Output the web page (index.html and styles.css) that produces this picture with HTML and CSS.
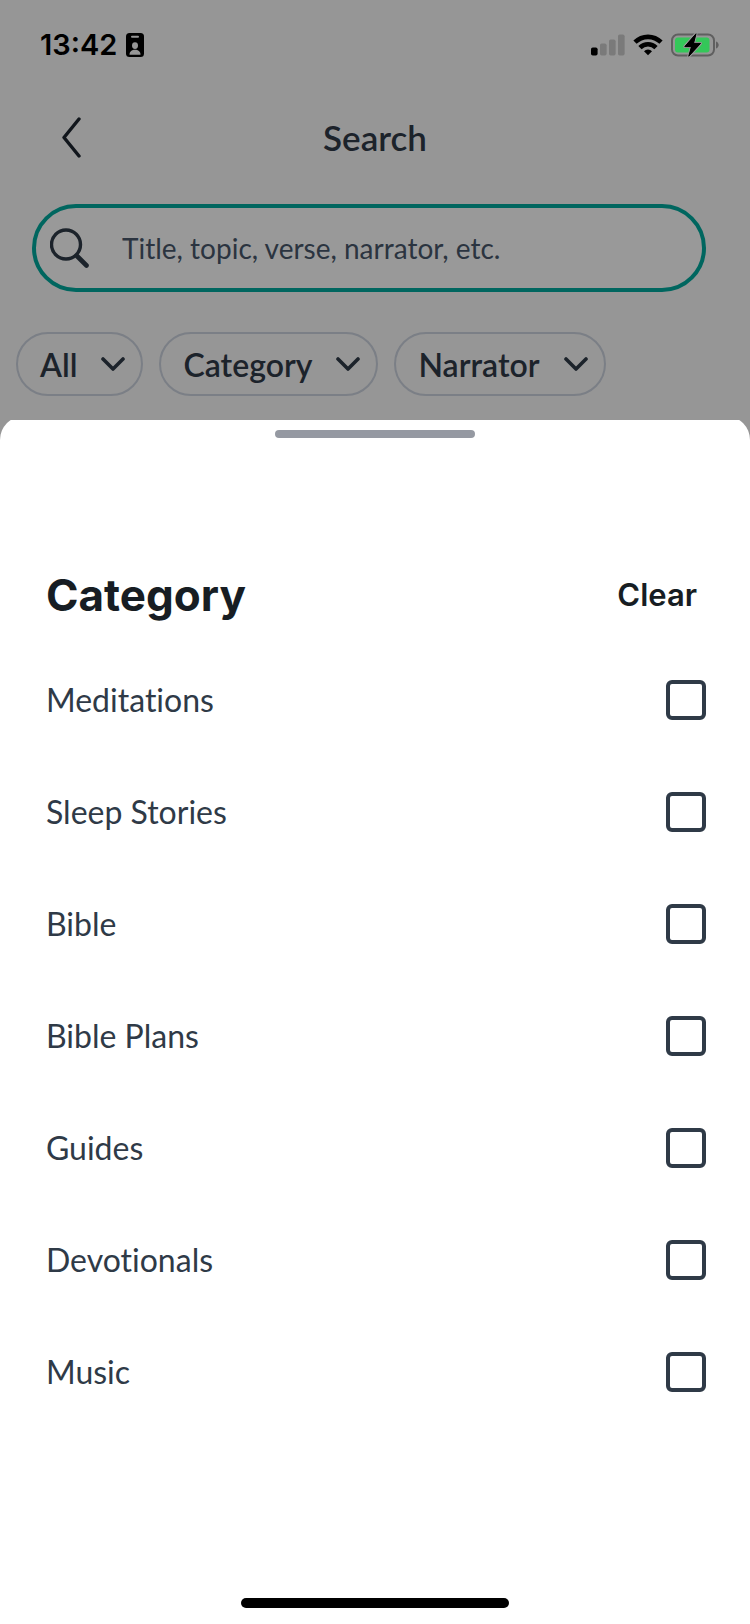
FILE: index.html
```
<!DOCTYPE html>
<html lang="en">
<head>
<meta charset="utf-8">
<meta name="viewport" content="width=device-width, initial-scale=1">
<title>Search</title>
<link rel="stylesheet" href="styles.css">
</head>
<body>
<div class="screen">
  <div class="status">
    <div class="status-left">
      <span class="time">13:42</span>
      <svg class="badge" width="18" height="24" viewBox="0 0 18 24" aria-hidden="true">
        <rect width="18" height="24" rx="3.5" fill="#000"/>
        <rect x="5" y="2.8" width="8" height="2" rx="1" fill="#969696"/>
        <ellipse cx="9" cy="12.6" rx="3" ry="3.4" fill="#969696"/>
        <path d="M3.5 21.8c0-3.400 2.400-5 5.500-5s5.500 1.600 5.500 5z" fill="#969696"/>
      </svg>
    </div>
    <div class="status-right">
      <svg width="34" height="22" viewBox="0 0 34 22" aria-hidden="true">
        <rect x="0" y="13.500" width="6.600" height="8" rx="1.800" fill="#000"/>
        <rect x="9" y="9.500" width="6.600" height="12" rx="1.800" fill="#7a7a7a"/>
        <rect x="18" y="5.500" width="6.600" height="16" rx="1.800" fill="#7a7a7a"/>
        <rect x="27" y="0.500" width="6.600" height="21" rx="1.800" fill="#7a7a7a"/>
      </svg>
      <svg width="30" height="22" viewBox="0 0 30 22" aria-hidden="true">
        <g fill="none" stroke="#000" stroke-width="4.600">
          <path d="M2 8.200a18.500 18.500 0 0 1 26 0"/>
          <path d="M7 13.600a11.400 11.400 0 0 1 16 0"/>
        </g>
        <path d="M15 21.300l-4-4.100a5.800 5.800 0 0 1 8 0z" fill="#000"/>
      </svg>
      <svg width="48" height="24" viewBox="0 0 48 24" aria-hidden="true">
        <rect x="1" y="1.500" width="42" height="21" rx="6" fill="none" stroke="#5f5f5f" stroke-width="2"/>
        <path d="M45 8.500c3.600 1.200 3.600 5.800 0 7z" fill="#5f5f5f"/>
        <rect x="4" y="4.500" width="34.500" height="15" rx="3" fill="#34c759"/>
        <path d="M25 0.800L13.800 13.600h6.700L17.800 23.200 29.500 10.400h-7z" fill="#000" stroke="#969696" stroke-width="3" stroke-linejoin="round" paint-order="stroke"/>
        <path d="M25 0.800L13.800 13.600h6.700L17.800 23.200 29.500 10.400h-7z" fill="#000" stroke="#000" stroke-width="1" stroke-linejoin="round"/>
      </svg>
    </div>
  </div>

  <header class="topbar">
    <button class="back" type="button" aria-label="Back">
      <svg width="20" height="42" viewBox="0 0 20 42" aria-hidden="true"><path d="M17 3L2 21.500l15 18.500" fill="none" stroke="#11161c" stroke-width="3.400" stroke-linecap="round" stroke-linejoin="round"/></svg>
    </button>
    <h1 class="title">Search</h1>
  </header>

  <label class="search">
    <svg width="40" height="40" viewBox="0 0 40 40" aria-hidden="true"><g fill="none" stroke="#1c232b" stroke-linecap="round"><circle cx="16" cy="16.500" r="14.500" stroke-width="3.400"/><path d="M27 28L36.500 37.500" stroke-width="4.600"/></g></svg>
    <input class="field" type="text" placeholder="Title, topic, verse, narrator, etc." aria-label="Search">
  </label>

  <div class="chips">
    <button class="chip" type="button">All <svg width="24" height="16" viewBox="0 0 24 16" aria-hidden="true"><path class="chevron" d="M2 3l10 10L22 3"/></svg></button>
    <button class="chip" type="button">Category <svg width="24" height="16" viewBox="0 0 24 16" aria-hidden="true"><path class="chevron" d="M2 3l10 10L22 3"/></svg></button>
    <button class="chip" type="button">Narrator <svg width="24" height="16" viewBox="0 0 24 16" aria-hidden="true"><path class="chevron" d="M2 3l10 10L22 3"/></svg></button>
  </div>

  <div class="sheet-clip">
    <section class="sheet" aria-labelledby="sheet-title">
      <div class="handle"></div>
      <div class="sheet-head">
        <h2 class="sheet-title" id="sheet-title">Category</h2>
        <button class="clear" type="button">Clear</button>
      </div>
      <div class="options">
        <label class="option"><span>Meditations</span><input class="box" type="checkbox"></label>
        <label class="option"><span>Sleep Stories</span><input class="box" type="checkbox"></label>
        <label class="option"><span>Bible</span><input class="box" type="checkbox"></label>
        <label class="option"><span>Bible Plans</span><input class="box" type="checkbox"></label>
        <label class="option"><span>Guides</span><input class="box" type="checkbox"></label>
        <label class="option"><span>Devotionals</span><input class="box" type="checkbox"></label>
        <label class="option"><span>Music</span><input class="box" type="checkbox"></label>
      </div>
      <div class="home"></div>
    </section>
  </div>
</div>
</body>
</html>
```
FILE: styles.css
```
* {
  box-sizing: border-box;
}

body {
  margin: 0;
  background: #969696;
  font-family: Lato, "Open Sans", sans-serif;
  font-variant-ligatures: none;
  color: #1c232b;
}

button {
  border: 0;
  padding: 0;
  background: none;
  color: inherit;
  font-family: inherit;
}

svg {
  display: block;
  flex: none;
}

.screen {
  display: flex;
  flex-direction: column;
  min-height: 100vh;
}

.status {
  display: flex;
  justify-content: space-between;
  align-items: center;
  height: 90px;
  padding: 0 31px 0 40px;
}

.status-left {
  display: flex;
  align-items: center;
  gap: 9px;
}

.time {
  font: 600 29px/36px Inter, sans-serif;
  color: #000;
}

.status-right {
  display: flex;
  align-items: center;
  gap: 8px;
}

.topbar {
  display: grid;
  grid-template-columns: 60px 1fr 60px;
  align-items: center;
  height: 94px;
  padding: 0 42px;
}

.back {
  display: flex;
  justify-content: center;
}

.title {
  margin: 0;
  font-size: 35px;
  font-weight: 600;
  line-height: 40px;
  text-align: center;
}

.search {
  display: flex;
  align-items: center;
  gap: 32px;
  height: 88px;
  margin: 20px 44px 0 32px;
  padding: 0 14px;
  border: 4px solid #00665f;
  border-radius: 44px;
  background: #999;
}

.field {
  flex: 1;
  min-width: 0;
  border: 0;
  padding: 0;
  outline: 0;
  background: none;
  font: 400 28px/36px Lato, "Open Sans", sans-serif;
  font-variant-ligatures: none;
  color: #2b3440;
}

.field::placeholder {
  color: #2b3440;
  opacity: 1;
}

.chips {
  display: flex;
  gap: 16px;
  padding: 40px 16px 24px;
}

.chip {
  display: flex;
  align-items: center;
  gap: 24px;
  height: 64px;
  padding: 0 16px 0 22px;
  border: 2px solid #7b7f86;
  border-radius: 32px;
  font-size: 32px;
  font-weight: 600;
}

.chevron {
  fill: none;
  stroke: #1c232b;
  stroke-width: 3.6;
  stroke-linecap: round;
  stroke-linejoin: round;
}

.sheet-clip {
  display: flex;
  flex: 1;
  overflow: hidden;
}

.sheet {
  display: flex;
  flex: 1;
  flex-direction: column;
  margin-top: -4px;
  padding: 14px 44px 16px;
  border-radius: 24px 24px 0 0;
  background: #fff;
}

.handle {
  align-self: center;
  width: 200px;
  height: 8px;
  border-radius: 4px;
  background: #9599a2;
}

.sheet-head {
  display: flex;
  justify-content: space-between;
  align-items: center;
  height: 98px;
  margin-top: 108px;
  padding: 0 9px 0 2px;
  color: #171d23;
}

.sheet-title {
  margin: 0;
  font: 700 44px/56px Inter, sans-serif;
}

.clear {
  font: 600 31px/40px Inter, sans-serif;
}

.option {
  display: flex;
  justify-content: space-between;
  align-items: center;
  height: 112px;
  padding-left: 2px;
  font-size: 32px;
  line-height: 40px;
  color: #2f3a47;
}

.box {
  appearance: none;
  width: 40px;
  height: 40px;
  margin: 0;
  border: 4px solid #2f3a47;
  border-radius: 6px;
}

.box:checked {
  background: #2f3a47;
}

.home {
  align-self: center;
  width: 268px;
  height: 10px;
  margin-top: auto;
  border-radius: 5px;
  background: #000;
}
```
